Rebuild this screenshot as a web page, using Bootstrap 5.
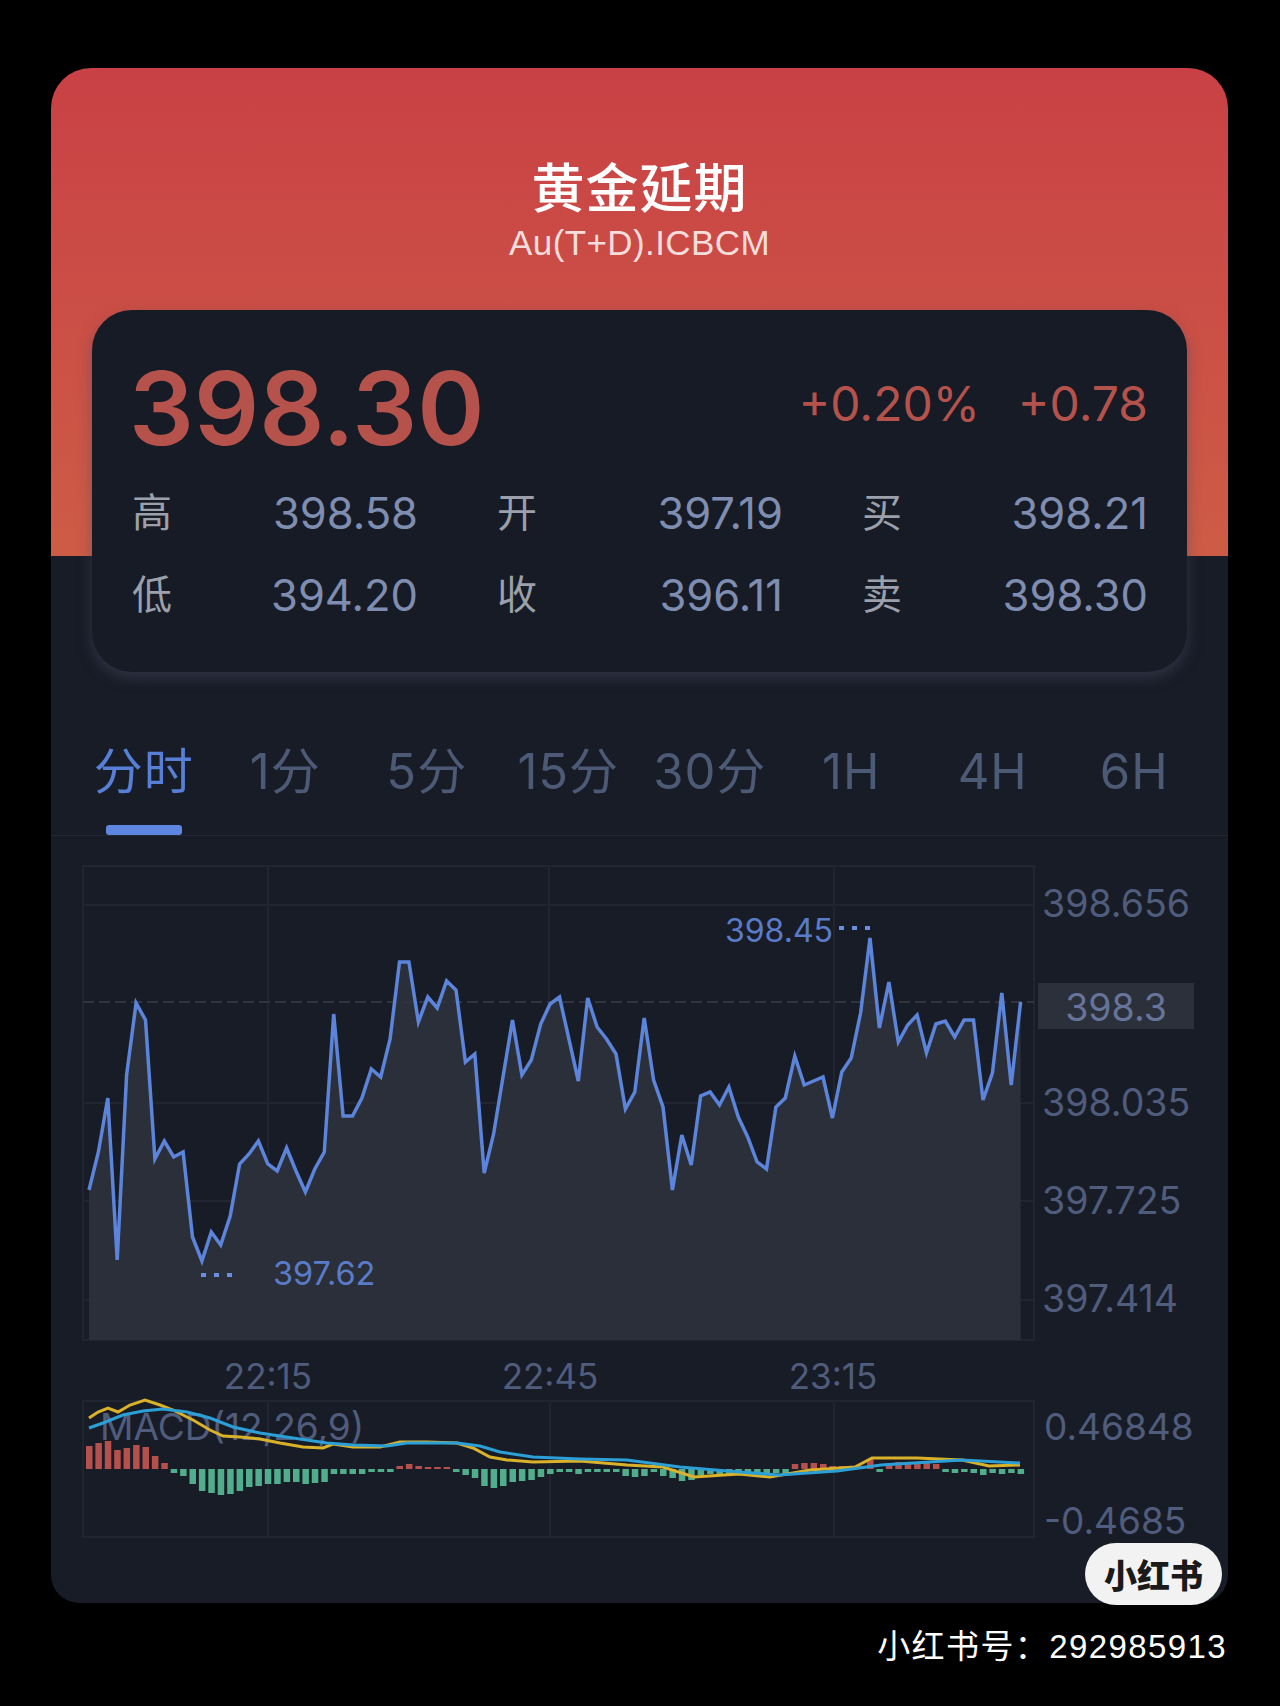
<!DOCTYPE html>
<html lang="zh">
<head>
<meta charset="utf-8">
<meta name="viewport" content="width=device-width, initial-scale=1">
<link href="https://cdn.jsdelivr.net/npm/bootstrap@5.3.2/dist/css/bootstrap.min.css" rel="stylesheet">
<script src="https://cdn.jsdelivr.net/npm/bootstrap@5.3.2/dist/js/bootstrap.bundle.min.js"></script>
<style>
 body{ background:#000; font-family:Inter,"Noto Sans CJK SC",sans-serif; overflow:hidden; }
 .quote-card{ position:relative; width:1177px; height:1535px; margin:68px 0 0 51px; border-radius:40px 40px 28px 28px;
   background:linear-gradient(#c94145,#cd5c46) top/100% 488px no-repeat #181c27; }
 .quote-head{ height:242px; color:#fff; padding-top:88px; }
 .quote-title{ font-size:53px; line-height:66px; font-weight:500; letter-spacing:1px; }
 .quote-code{ font-size:35px; line-height:50px; margin-top:-4px; letter-spacing:.4px; color:rgba(255,255,255,.82); font-family:"Liberation Sans",sans-serif; }
 .quote-panel{ height:362px; margin:0 41px; padding:45px 39px 0 37px; border-radius:40px; background:#171b26; box-shadow:0 6px 14px rgba(72,76,96,.5); }
 .price-big{ font-size:102px; line-height:106px; font-weight:600; color:#b5524c; }
 .price-change{ font-size:48px; line-height:98px; color:#b5524c; gap:38px; }
 .stat-grid{ display:grid; grid-template-columns:repeat(3,286px); column-gap:79px; margin:11px 0 0 3px; }
 .stat-cell{ height:82px; line-height:82px; font-size:43.5px; color:#7f8db0; }
 .stat-name{ font-size:40px; color:#9ba0aa; }
 .tab-bar{ margin-top:47px; padding:0 23px 0 22px; height:117px; border-bottom:1px solid #222733; }
 .tab-item{ padding:0; height:116px; line-height:106px; font-size:49px; letter-spacing:1px; color:#4d5a76; }
 .tab-item.active,.tab-item:hover{ color:#587fd6; }
 .tab-mark{ display:block; width:76px; height:10px; margin:0 auto; border-radius:3px; background:#5c86e0; }
 .chart-box{ display:block; }
 .chart-box text{ font-family:Inter,sans-serif; fill:#505c7c; }
 .logo-pill{ position:absolute; right:6px; bottom:-2px; width:137px; height:62px; border-radius:31px; background:#f2f2f2; color:#1a1a1a;
   font-family:"Noto Sans CJK SC",sans-serif; font-weight:900; font-size:33px; line-height:62px; text-align:center; }
 .page-foot{ width:1176px; margin:24px 0 0 51px; color:#fff; line-height:40px; font-size:33px; text-align:right; font-family:"Liberation Sans","Noto Sans CJK SC",sans-serif; letter-spacing:1.4px; }
</style>
</head>
<body>
<div class="quote-card">
  <div class="quote-head text-center">
    <div class="quote-title">黄金延期</div>
    <div class="quote-code">Au(T+D).ICBCM</div>
  </div>
  <div class="quote-panel">
    <div class="d-flex justify-content-between">
      <div class="price-big">398.30</div>
      <div class="price-change d-flex"><span>+0.20%</span><span>+0.78</span></div>
    </div>
    <div class="stat-grid">
      <div class="stat-cell d-flex justify-content-between"><span class="stat-name">高</span><span>398.58</span></div>
      <div class="stat-cell d-flex justify-content-between"><span class="stat-name">开</span><span>397.19</span></div>
      <div class="stat-cell d-flex justify-content-between"><span class="stat-name">买</span><span>398.21</span></div>
      <div class="stat-cell d-flex justify-content-between"><span class="stat-name">低</span><span>394.20</span></div>
      <div class="stat-cell d-flex justify-content-between"><span class="stat-name">收</span><span>396.11</span></div>
      <div class="stat-cell d-flex justify-content-between"><span class="stat-name">卖</span><span>398.30</span></div>
    </div>
  </div>
  <nav class="nav nav-justified tab-bar">
    <a class="nav-link tab-item active">分时<span class="tab-mark"></span></a>
    <a class="nav-link tab-item">1分</a>
    <a class="nav-link tab-item">5分</a>
    <a class="nav-link tab-item">15分</a>
    <a class="nav-link tab-item">30分</a>
    <a class="nav-link tab-item">1H</a>
    <a class="nav-link tab-item">4H</a>
    <a class="nav-link tab-item">6H</a>
  </nav>
  <svg id="chart" class="chart-box" width="1177" height="766" viewBox="51 836 1177 766"></svg>
  <div class="logo-pill">小红书</div>
</div>
<div class="page-foot">小红书号：292985913</div>
<script>
  // y of each minute on the price line, in page pixels
  var prices=[1190,1152,1098,1260,1075,1003,1020,1159,1141,1157,1152,1237,1261,1232,1245,1216,1164,1154,1141,1164,
    1171,1148,1171,1192,1169,1152,1014,1116,1116,1098,1069,1077,1039,962,962,1022,997,1008,981,990,
    1062,1054,1173,1134,1077,1020,1075,1060,1024,1004,997,1039,1081,998,1027,1039,1054,1109,1092,1018,
    1080,1107,1190,1135,1165,1096,1092,1105,1087,1117,1137,1162,1169,1107,1098,1056,1085,1081,1077,1118,
    1072,1058,1013,938,1028,982,1042,1025,1015,1053,1024,1021,1037,1020,1020,1100,1073,993,1085,1002];
  // macd bars, plus is red and minus is green
  var bars=[23,26,28,19,21,24,22,13,6,-4,-7,-15,-22,-24,-26,-25,-22,-18,-17,-15,-15,-13,-13,-15,-14,-13,-5,-5,-5,-5,-3,-3,-3,
    3,5,3,2,2,2,-3,-6,-9,-17,-19,-17,-13,-12,-11,-8,-5,-3,-3,-5,-3,-3,-3,-3,-7,-8,-7,-3,-7,-9,-12,-11,-6,-5,-5,-5,-5,-4,-4,-4,-4,-4,
    5,6,6,5,3,3,3,3,10,-3,6,7,6,6,6,5,-3,-4,-3,-4,-6,-4,-5,-4,-5];
  var yellow="89,1418 98,1412 108,1408 118,1412 130,1405 145,1400 160,1405 173,1410 193,1420 210,1430 223,1436 240,1437 260,1439 280,1443 303,1447 323,1448 333,1444 353,1447 380,1447 400,1442 427,1442 457,1443 473,1448 490,1457 507,1460 533,1462 580,1461 627,1465 663,1467 694,1477 739,1474 770,1477 810,1470 855,1467 872,1458 917,1458 962,1460 989,1466 1020,1465";
  var blue="89,1428 103,1423 123,1415 143,1411 163,1409 187,1412 210,1418 233,1427 260,1433 293,1438 327,1443 353,1445 387,1446 407,1443 457,1443 480,1446 500,1452 533,1457 580,1459 627,1460 680,1467 739,1472 779,1475 837,1471 881,1465 962,1460 1020,1463";

  function xOf(i){ return 89+i*9.41; }
  function label(x,y,size,txt,anchor,cls){
    return "<text x='"+x+"' y='"+y+"' font-size='"+size+"' text-anchor='"+(anchor||"start")+"' dominant-baseline='central'"+(cls?" style='fill:"+cls+"'":"")+">"+txt+"</text>";
  }
  function line(x1,y1,x2,y2){
    return "<line x1='"+x1+"' y1='"+y1+"' x2='"+x2+"' y2='"+y2+"' stroke='#20252f' stroke-width='2'/>";
  }

  var pts=prices.map(function(y,i){ return xOf(i).toFixed(1)+","+y; }).join(" ");
  var html="";

  // main chart frame
  html+="<rect x='83' y='866' width='951' height='474' fill='none' stroke='#20252f' stroke-width='2'/>";
  [905,1103,1201,1300].forEach(function(y){ html+=line(83,y,1034,y); });
  [268,549,834].forEach(function(x){ html+=line(x,866,x,1340); });
  html+="<polygon points='89,1340 "+pts+" 1020.6,1340' fill='#2a2f3a'/>";
  html+="<line x1='83' y1='1002' x2='1034' y2='1002' stroke='#2f3540' stroke-width='2' stroke-dasharray='11 5'/>";
  html+="<polyline points='"+pts+"' fill='none' stroke='#5c84da' stroke-width='3.5'/>";

  // low and high markers
  html+="<line x1='201' y1='1275' x2='234' y2='1275' stroke='#6b8fe0' stroke-width='4' stroke-dasharray='5 8'/>";
  html+=label(273,1273,32.5,"397.62","start","#5a7cc8");
  html+="<line x1='839' y1='928' x2='871' y2='928' stroke='#6b8fe0' stroke-width='4' stroke-dasharray='5 8'/>";
  html+=label(725,930,32,"398.45","start","#5a7cc8");

  // price axis
  html+="<rect x='1038' y='983' width='156' height='46' fill='#2b303b'/>";
  html+=label(1042,903,37.5,"398.656");
  html+=label(1116,1007,37.5,"398.3","middle","#66749a");
  html+=label(1042,1102,37.5,"398.035");
  html+=label(1042,1200,37.5,"397.725");
  html+=label(1042,1298,37.5,"397.414");

  // times
  html+=label(268,1376,35,"22:15","middle");
  html+=label(550,1376,35,"22:45","middle");
  html+=label(833,1376,35,"23:15","middle");

  // macd
  html+="<rect x='83' y='1401' width='951' height='136' fill='none' stroke='#20252f' stroke-width='2'/>";
  [268,550,834].forEach(function(x){ html+=line(x,1401,x,1537); });
  html+=label(100,1426,37,"MACD(12,26,9)");
  bars.forEach(function(b,i){
    var col=b>0?"#b5504c":"#52ad8c";
    html+="<rect x='"+(xOf(i)-3).toFixed(1)+"' y='"+(b>0?1469-b:1469)+"' width='6.5' height='"+Math.abs(b)+"' fill='"+col+"'/>";
  });
  html+="<polyline points='"+yellow+"' fill='none' stroke='#d9b22a' stroke-width='3'/>";
  html+="<polyline points='"+blue+"' fill='none' stroke='#2c9fd6' stroke-width='3'/>";
  html+=label(1044,1426,37,"0.46848");
  html+=label(1044,1520,37,"-0.4685");

  document.getElementById("chart").innerHTML=html;
</script>
</body>
</html>
